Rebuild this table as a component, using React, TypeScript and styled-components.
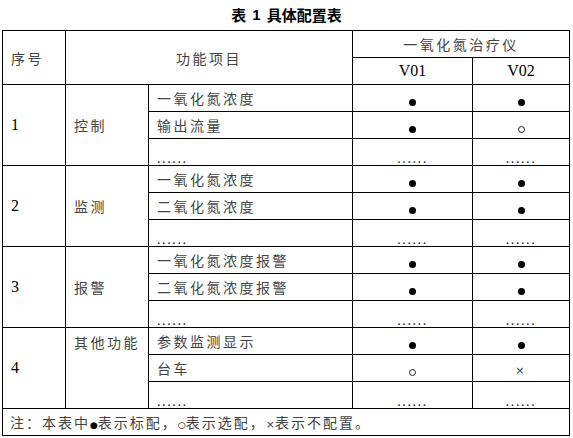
import React from "react"
import styled, { createGlobalStyle } from "styled-components"

const GlobalStyle = createGlobalStyle`
  body {
    margin: 0;
    background: #fff;
    font-family: "Noto Sans CJK SC", "Liberation Serif", serif;
  }
`

const Page = styled.div`
  width: 573px;
  padding: 0 2px;
  box-sizing: border-box;
`

const Title = styled.div`
  height: 30px;
  display: flex;
  align-items: center;
  justify-content: center;
  font-size: 15px;
  font-weight: 700;
  color: #000;
  padding-bottom: 2px;
  box-sizing: border-box;

  .num {
    font-family: "Liberation Sans", sans-serif;
    margin: 0 6px;
  }
`

const Table = styled.table`
  width: 567px;
  border-collapse: collapse;
  table-layout: fixed;
  border: 1px solid #000;
`

const Cell = styled.td<{ $align?: "left" | "center"; $valign?: "top" | "middle" | "bottom"; $serif?: boolean }>`
  border: 1px solid #000;
  padding: 0 0 0 8px;
  height: 26px;
  text-align: ${(p) => p.$align || "left"};
  vertical-align: ${(p) => p.$valign || "middle"};
  font-size: 14px;
  letter-spacing: ${(p) => (p.$serif ? "0" : "2.5px")};
  color: ${(p) => (p.$serif ? "#000" : "#444")};
  font-family: ${(p) => (p.$serif ? '"Liberation Serif", serif' : '"Noto Sans CJK SC", sans-serif')};
  ${(p) => (p.$serif ? "font-size: 16px;" : "")}
  ${(p) => (p.$align === "center" ? "padding: 0;" : "")}
  ${(p) => (p.$valign === "top" ? "padding-top: 4px;" : "")}
`

const Dots = styled.span`
  font-family: "Liberation Serif", serif;
  font-size: 14px;
  letter-spacing: 1.6px;
  color: #222;
  position: relative;
  top: 5px;
`

const Mark = styled.span<{ $kind: "std" | "opt" | "no" }>`
  display: inline-block;
  vertical-align: middle;
  position: relative;
  top: 2px;
  ${(p) =>
    p.$kind === "std"
      ? "width: 7px; height: 7px; border-radius: 50%; background: #000;"
      : p.$kind === "opt"
      ? "width: 6px; height: 6px; border-radius: 50%; border: 1px solid #222; box-sizing: border-box; width: 7px; height: 7px;"
      : "font-family: 'DejaVu Sans', sans-serif; font-size: 11px; color: #444; line-height: 1; top: 0;"}
`

const Note = styled.td`
  border: 1px solid #000;
  height: 26px;
  padding: 0 0 0 7px;
  font-size: 14px;
  letter-spacing: 2px;
  color: #444;
  font-family: "Noto Sans CJK SC", sans-serif;

  .sym {
    font-family: "DejaVu Sans", sans-serif;
    font-size: 9px;
    letter-spacing: 0;
    color: #000;
  }
  .x {
    font-family: "DejaVu Sans", sans-serif;
    font-size: 11px;
    letter-spacing: 0;
  }
`

type Val = "std" | "opt" | "no" | "dots"

interface Item {
  name: string
  v01: Val
  v02: Val
}

interface Group {
  no: string
  label: string
  labelTop?: boolean
  items: Item[]
}

const groups: Group[] = [
  {
    no: "1",
    label: "控制",
    items: [
      { name: "一氧化氮浓度", v01: "std", v02: "std" },
      { name: "输出流量", v01: "std", v02: "opt" },
      { name: "", v01: "dots", v02: "dots" },
    ],
  },
  {
    no: "2",
    label: "监测",
    items: [
      { name: "一氧化氮浓度", v01: "std", v02: "std" },
      { name: "二氧化氮浓度", v01: "std", v02: "std" },
      { name: "", v01: "dots", v02: "dots" },
    ],
  },
  {
    no: "3",
    label: "报警",
    items: [
      { name: "一氧化氮浓度报警", v01: "std", v02: "std" },
      { name: "二氧化氮浓度报警", v01: "std", v02: "std" },
      { name: "", v01: "dots", v02: "dots" },
    ],
  },
  {
    no: "4",
    label: "其他功能",
    labelTop: true,
    items: [
      { name: "参数监测显示", v01: "std", v02: "std" },
      { name: "台车", v01: "opt", v02: "no" },
      { name: "", v01: "dots", v02: "dots" },
    ],
  },
]

const Value = ({ v }: { v: Val }) => {
  if (v === "dots") return <Dots>......</Dots>
  if (v === "no") return <Mark $kind="no">×</Mark>
  return <Mark $kind={v} />
}

const App = () => {
  return (
    <Page>
      <GlobalStyle />
      <Title>
        表<span className="num">1</span>具体配置表
      </Title>
      <Table>
        <colgroup>
          <col style={{ width: 63 }} />
          <col style={{ width: 83 }} />
          <col style={{ width: 204 }} />
          <col style={{ width: 120 }} />
          <col style={{ width: 97 }} />
        </colgroup>
        <tbody>
          <tr>
            <Cell rowSpan={2}>序号</Cell>
            <Cell rowSpan={2} colSpan={2} $align="center">
              功能项目
            </Cell>
            <Cell colSpan={2} $align="center">
              一氧化氮治疗仪
            </Cell>
          </tr>
          <tr>
            <Cell $align="center" $serif>
              V01
            </Cell>
            <Cell $align="center" $serif>
              V02
            </Cell>
          </tr>
          {groups.map((g) =>
            g.items.map((it, i) => (
              <tr key={g.no + i}>
                {i === 0 && (
                  <>
                    <Cell rowSpan={3} $serif>
                      {g.no}
                    </Cell>
                    <Cell rowSpan={3} $valign={g.labelTop ? "top" : "middle"}>
                      {g.label}
                    </Cell>
                  </>
                )}
                <Cell>{it.name ? it.name : <Dots>......</Dots>}</Cell>
                <Cell $align="center">
                  <Value v={it.v01} />
                </Cell>
                <Cell $align="center">
                  <Value v={it.v02} />
                </Cell>
              </tr>
            ))
          )}
          <tr>
            <Note colSpan={5}>
              注：本表中<span className="sym">●</span>表示标配，<span className="sym">○</span>表示选配，
              <span className="x">×</span>表示不配置。
            </Note>
          </tr>
        </tbody>
      </Table>
    </Page>
  )
}

export default App
